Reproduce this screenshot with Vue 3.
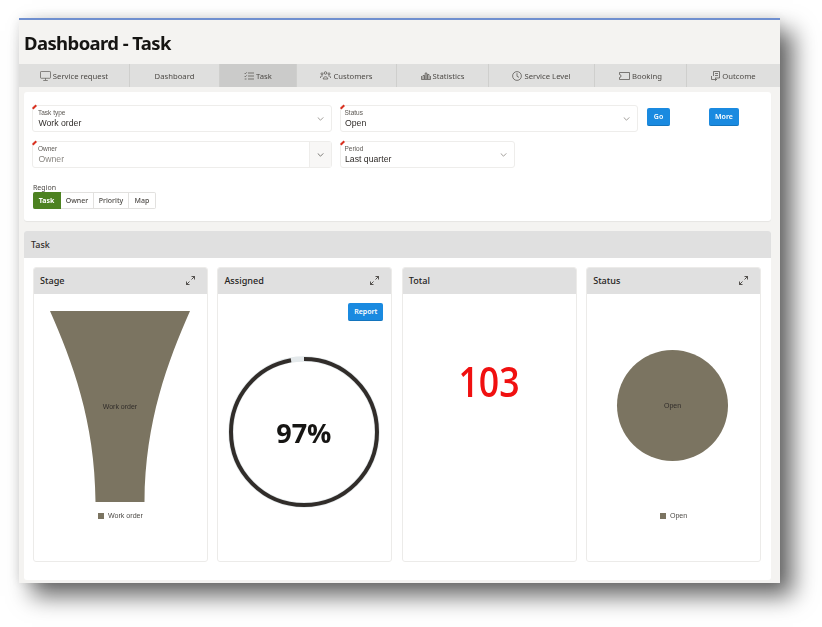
<script setup>
const tabs = [
  { label: 'Service request', icon: 'monitor', w: 111 },
  { label: 'Dashboard', icon: '', w: 90 },
  { label: 'Task', icon: 'list', w: 77, active: true },
  { label: 'Customers', icon: 'users', w: 100 },
  { label: 'Statistics', icon: 'chart', w: 92 },
  { label: 'Service Level', icon: 'clock', w: 106 },
  { label: 'Booking', icon: 'ticket', w: 92 },
  { label: 'Outcome', icon: 'outcome', w: 93 },
]
const seg = ['Task', 'Owner', 'Priority', 'Map']
const r = 73
const circ = 2 * Math.PI * r
const dash = `${circ * 0.97} ${circ * 0.03}`
</script>

<template>
  <div class="page">
    <div class="window">
      <h1 class="title">Dashboard - Task</h1>
      <nav class="tabs">
        <div v-for="t in tabs" :key="t.label" class="tab" :class="{ active: t.active }" :style="{ width: t.w + 'px' }">
          <svg v-if="t.icon === 'monitor'" width="11" height="10" viewBox="0 0 12 11" class="ic"><rect x="0.5" y="0.5" width="11" height="7.5" rx="0.8"/><path d="M6 8v2M3.5 10.5h5"/></svg>
          <svg v-else-if="t.icon === 'list'" width="10" height="8" viewBox="0 0 10 8" class="ic"><path d="M4 1h6M4 4h6M4 7h6M.5 1l.8.8L2.8.3M.5 4l.8.8L2.8 3.3M.7 7h1.8"/></svg>
          <svg v-else-if="t.icon === 'users'" width="11" height="9" viewBox="0 0 11 9" class="ic"><circle cx="5.5" cy="2" r="1.3"/><circle cx="2" cy="2.8" r="1"/><circle cx="9" cy="2.8" r="1"/><path d="M3.2 8c0-3 4.6-3 4.6 0zM.4 7c0-2 1.5-2.5 2.4-2M10.600 7c0-2-1.500-2.500-2.400-2"/></svg>
          <svg v-else-if="t.icon === 'chart'" width="10" height="8" viewBox="0 0 10 8" class="ic"><path d="M.5 4v3.500h9V4M2 7V3.500h1.500V7M4.200 7V1h1.600v6M6.500 7V2.500H8V7"/></svg>
          <svg v-else-if="t.icon === 'clock'" width="10" height="10" viewBox="0 0 10 10" class="ic"><circle cx="5" cy="5" r="4.400"/><path d="M5 2.200V5.300L7 6.400"/></svg>
          <svg v-else-if="t.icon === 'ticket'" width="11" height="8" viewBox="0 0 11 8" class="ic"><path d="M.5.5h10v7H.5V5.500a1.500 1.500 0 0 0 0-3z"/></svg>
          <svg v-else-if="t.icon === 'outcome'" width="9" height="10" viewBox="0 0 9 10" class="ic"><path d="M2.500 5V.5h6v6.500H4M4 2.500h3M4 4.500h3M.5 5v3.500h5M4 7.300 5.500 8.500 4 9.700"/></svg>
          <span>{{ t.label }}</span>
        </div>
      </nav>

      <div class="body">
        <section class="filters">
          <div class="row row1">
            <div class="field wide">
              <label>Task type</label>
              <div class="val">Work order</div>
              <svg class="chev" width="7" height="4" viewBox="0 0 8 5"><path d="M.5.5 4 4 7.500.5"/></svg>
            </div>
            <div class="field status">
              <label>Status</label>
              <div class="val">Open</div>
              <svg class="chev" width="7" height="4" viewBox="0 0 8 5"><path d="M.5.5 4 4 7.500.5"/></svg>
            </div>
            <button class="btn go">Go</button>
            <button class="btn more">More</button>
          </div>
          <div class="row row2">
            <div class="field wide owner">
              <label>Owner</label>
              <div class="val ph">Owner</div>
              <div class="addon"><svg width="7" height="4" viewBox="0 0 8 5"><path d="M.5.5 4 4 7.500.5"/></svg></div>
            </div>
            <div class="field period">
              <label>Period</label>
              <div class="val">Last quarter</div>
              <svg class="chev" width="7" height="4" viewBox="0 0 8 5"><path d="M.5.5 4 4 7.500.5"/></svg>
            </div>
          </div>
          <div class="region-label">Region</div>
          <div class="seg">
            <div v-for="(s, i) in seg" :key="s" class="seg-item" :class="{ on: i === 0 }">{{ s }}</div>
          </div>
        </section>

        <section class="panel">
          <header class="panel-head">Task</header>
          <div class="cards">
            <article class="card">
              <header class="card-head"><span>Stage</span>
                <svg class="expand" width="9" height="9" viewBox="0 0 9 9"><path d="M5.500.5h3v3M8.500.5 5.500 3.500M3.500 8.500h-3v-3M.5 8.500l3-3"/></svg>
              </header>
              <div class="card-body stage">
                <div class="funnel">
                  <svg width="140" height="191" viewBox="0 0 140 191"><path d="M0 0H140C118 50 95 110 94.500 191H45.500C45 110 22 50 0 0Z" fill="#7b7461"/></svg>
                  <span class="funnel-label">Work order</span>
                </div>
                <div class="legend"><i></i>Work order</div>
              </div>
            </article>

            <article class="card">
              <header class="card-head"><span>Assigned</span>
                <svg class="expand" width="9" height="9" viewBox="0 0 9 9"><path d="M5.500.5h3v3M8.500.5 5.500 3.500M3.500 8.500h-3v-3M.5 8.500l3-3"/></svg>
              </header>
              <div class="card-body assigned">
                <button class="btn report">Report</button>
                <div class="gauge">
                  <svg width="152" height="152" viewBox="0 0 152 152">
                    <circle cx="76" cy="76" :r="r" fill="none" stroke="#e4e9eb" stroke-width="5.500"/>
                    <circle cx="76" cy="76" :r="r" fill="none" stroke="#312d2a" stroke-width="4" :stroke-dasharray="dash" transform="rotate(-90 76 76)"/>
                  </svg>
                  <span class="pct">97%</span>
                </div>
              </div>
            </article>

            <article class="card">
              <header class="card-head"><span>Total</span></header>
              <div class="card-body total"><span class="num">103</span></div>
            </article>

            <article class="card">
              <header class="card-head"><span>Status</span>
                <svg class="expand" width="9" height="9" viewBox="0 0 9 9"><path d="M5.500.5h3v3M8.500.5 5.500 3.500M3.500 8.500h-3v-3M.5 8.500l3-3"/></svg>
              </header>
              <div class="card-body statusc">
                <div class="pie"><span>Open</span></div>
                <div class="legend"><i></i>Open</div>
              </div>
            </article>
          </div>
        </section>
      </div>
    </div>
  </div>
</template>

<style>
html, body { margin: 0; background: #fff; overflow: hidden; }
</style>

<style scoped>
* { box-sizing: border-box; }
.page {
  width: 822px;
  height: 627px;
  padding: 18px 42px 44px 19px;
  font-family: "Noto Sans", "Open Sans", sans-serif;
  color: #312d2a;
  filter: blur(0.4px);
}
.window {
  height: 565px;
  background: #f4f3f1;
  border-top: 2px solid #6f8fcf;
  box-shadow: 13px 13px 22px rgba(0, 0, 0, .6), 0 0 12px rgba(0, 0, 0, .1);
  display: flex;
  flex-direction: column;
}
.title {
  margin: 0;
  height: 44px;
  padding: 10px 0 0 5px;
  font-size: 18.500px;
  line-height: 25px;
  font-weight: 700;
  letter-spacing: -.6px;
  color: #161513;
}
.tabs { display: flex; height: 23px; background: #dfdfde; }
.tab {
  display: flex;
  align-items: center;
  justify-content: center;
  gap: 2px;
  font-size: 7.700px;
  color: #4d4a46;
  border-right: 1px solid #cfcfcd;
}
.tab.active { background: #cbcbca; }
.tab:last-child { border-right: none; }
.ic { fill: none; stroke: #4d4a46; stroke-width: .7; flex: none; }

.body { padding: 5px 9px 3px 5px; flex: 1; display: flex; flex-direction: column; gap: 10px; }
.filters {
  height: 129px;
  background: #fff;
  border-radius: 3px;
  padding: 13px 9px 0 8px;
  box-shadow: 0 1px 1px rgba(0, 0, 0, .06);
}
.row { display: flex; align-items: flex-start; }
.row1 { gap: 8px; }
.row2 { gap: 8px; margin-top: 9px; }
.field {
  position: relative;
  height: 27px;
  border: 1px solid #eeedeb;
  border-radius: 3px;
  padding: 3px 0 0 5px;
  flex: none;
  font-family: "Liberation Sans", Arial, sans-serif;
}
.field::before {
  content: "";
  position: absolute;
  left: -1px;
  top: 0;
  width: 5px;
  height: 2px;
  background: #d9301f;
  transform: rotate(-45deg);
}
.field label { display: block; font-size: 6.500px; line-height: 8px; color: #5c5853; }
.val { font-size: 8.700px; line-height: 11px; margin: 1px 0 0 .5px; color: #312d2a; }
.val.ph { color: #8a8782; }
.wide { width: 300px; }
.status { width: 298px; padding-left: 3.500px; }
.period { width: 175px; padding-left: 3.500px; }
.chev { position: absolute; right: 7px; top: 11px; fill: none; stroke: #7d7974; stroke-width: .9; }
.addon {
  position: absolute;
  right: 0;
  top: 0;
  bottom: 0;
  width: 22px;
  background: #f8f7f6;
  border-left: 1px solid #eeedeb;
  display: flex;
  align-items: center;
  justify-content: center;
}
.addon svg { fill: none; stroke: #4d4a46; stroke-width: .9; }
.btn {
  border: none;
  border-bottom: 1px solid #1374bd;
  background: #1a8ae0;
  color: #fff;
  font-family: inherit;
  font-size: 7px;
  font-weight: 600;
  border-radius: 2px;
  padding: 0;
  height: 17.500px;
}
.go { width: 23px; margin: 3px 0 0 1px; }
.more { width: 30px; margin: 3px 0 0 31px; }
.region-label { font-size: 7px; line-height: 9px; margin: 15px 0 0 1px; color: #4d4a46; }
.seg { display: flex; margin: 0 0 0 1px; height: 17px; width: fit-content; }
.seg-item {
  font-size: 7px;
  font-weight: 500;
  display: flex;
  align-items: center;
  justify-content: center;
  border: 1px solid #e2e1df;
  border-left: none;
  color: #4d4a46;
  width: 33px;
}
.seg-item:nth-child(1) { width: 28px; background: #4d8221; border-color: #4d8221; color: #fff; font-weight: 700; border-radius: 2px 0 0 2px; }
.seg-item:nth-child(3) { width: 35px; }
.seg-item:nth-child(4) { width: 27px; border-radius: 0 2px 2px 0; }

.panel { height: 349px; background: #fff; border-radius: 3px; overflow: hidden; }
.panel-head {
  height: 27px;
  background: #e0e0e0;
  padding-left: 7px;
  font-size: 9px;
  font-weight: 500;
  line-height: 27px;
  color: #312d2a;
}
.cards { display: flex; gap: 9.500px; padding: 9px 10px 0 9px; }
.card {
  width: 175.500px;
  height: 295px;
  border: 1px solid #ecebe9;
  border-radius: 3px;
  overflow: hidden;
  display: flex;
  flex-direction: column;
}
.card-head {
  height: 27px;
  flex: none;
  margin: -1px -1px 0;
  background: #e0e0e0;
  padding: 0 13px 0 7px;
  font-size: 9.100px;
  font-weight: 500;
  display: flex;
  align-items: center;
  justify-content: space-between;
  color: #252320;
}
.expand { fill: none; stroke: #312d2a; stroke-width: .8; }
.card-body { flex: 1; display: flex; flex-direction: column; align-items: center; position: relative; }
.stage { padding-top: 17px; }
.funnel { position: relative; width: 140px; height: 191px; margin-right: 1px; }
.funnel svg { display: block; }
.funnel-label {
  position: absolute;
  left: 0;
  right: 0;
  top: 91px;
  text-align: center;
  font-family: "Liberation Sans", Arial, sans-serif;
  font-size: 7px;
  line-height: 9px;
  color: #312d2a;
}
.legend {
  display: flex;
  align-items: center;
  gap: 4px;
  margin-top: 9px;
  font-family: "Liberation Sans", Arial, sans-serif;
  font-size: 7.100px;
  line-height: 10px;
  color: #4d4a46;
}
.legend i { width: 6px; height: 6px; background: #7b7461; }
.assigned { padding-top: 9px; }
.report { position: absolute; right: 9px; top: 9px; width: 35px; height: 18px; transform: translateX(1px); }
.gauge { position: relative; width: 152px; height: 152px; margin: 53px 2px 0 0; }
.gauge svg { display: block; }
.pct {
  position: absolute;
  inset: 0;
  display: flex;
  align-items: center;
  justify-content: center;
  font-family: "Open Sans", "Noto Sans", sans-serif;
  font-size: 27px;
  font-weight: 700;
  color: #161513;
}
.total { padding-top: 62px; }
.num {
  font-family: "Open Sans", "Noto Sans", sans-serif;
  font-size: 42px;
  line-height: 50px;
  font-weight: 600;
  color: #f01010;
  display: inline-block;
  transform: scaleX(.85);
}
.statusc { padding-top: 56px; }
.pie {
  width: 111px;
  height: 111px;
  margin-right: 2px;
  border-radius: 50%;
  background: #7b7461;
  display: flex;
  align-items: center;
  justify-content: center;
  font-family: "Liberation Sans", Arial, sans-serif;
  font-size: 7px;
  color: #312d2a;
}
.statusc .legend { margin-top: 50px; }
</style>
